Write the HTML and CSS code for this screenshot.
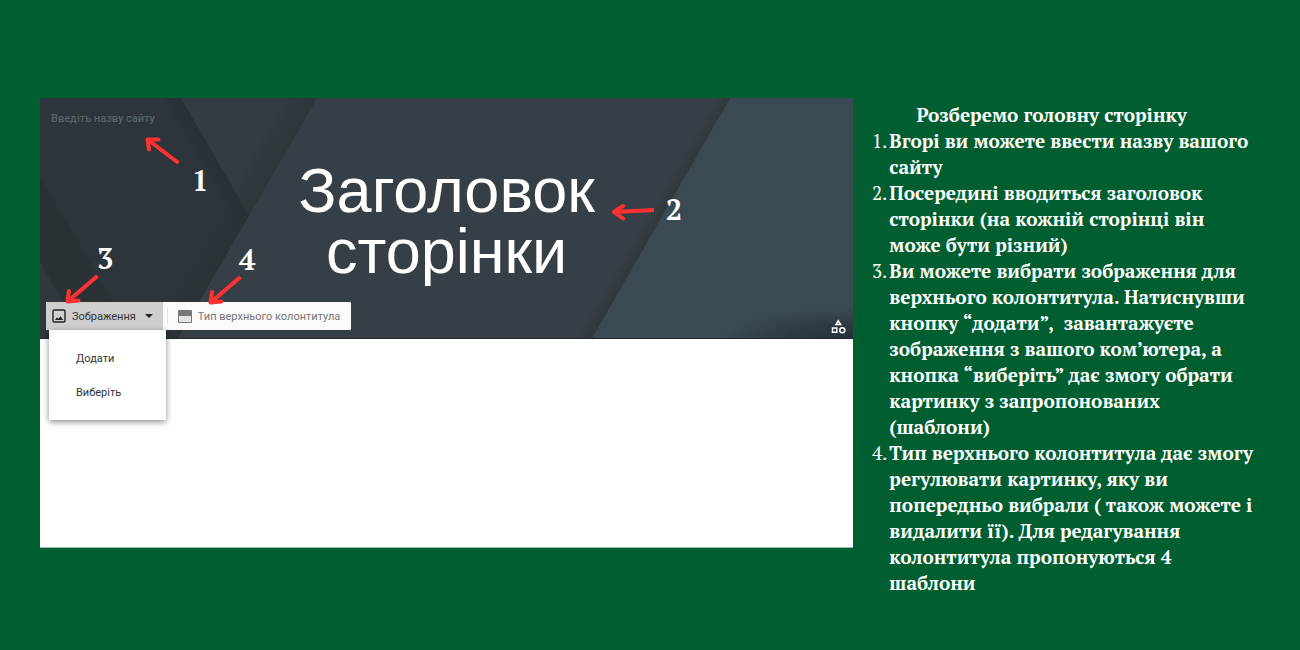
FILE: index.html
```html
<!DOCTYPE html>
<html lang="uk">
<head>
<meta charset="utf-8">
<meta name="viewport" content="width=device-width, initial-scale=1">
<title>Розберемо головну сторінку</title>
<link rel="stylesheet" href="styles.css">
</head>
<body>
<main class="slide">
  <section class="preview" aria-label="Редактор сайту">
    <header class="hero">
      <svg class="hero-bg" viewBox="0 0 813 241" preserveAspectRatio="none" aria-hidden="true">
        <defs>
          <linearGradient id="fold" gradientUnits="userSpaceOnUse" x1="160" y1="68" x2="175" y2="59">
            <stop offset="0" stop-color="#282e30" stop-opacity="0"/><stop offset="1" stop-color="#282e30" stop-opacity=".6"/>
          </linearGradient>
          <linearGradient id="edge" gradientUnits="userSpaceOnUse" x1="217" y1="44" x2="243" y2="59">
            <stop offset="0" stop-color="#2a3032" stop-opacity="0"/><stop offset="1" stop-color="#2a3032" stop-opacity=".55"/>
          </linearGradient>
          <linearGradient id="edge2" gradientUnits="userSpaceOnUse" x1="609" y1="113" x2="621" y2="120">
            <stop offset="0" stop-color="#2a3032" stop-opacity="0"/><stop offset="1" stop-color="#2a3032" stop-opacity=".4"/>
          </linearGradient>
          <radialGradient id="corner" gradientUnits="userSpaceOnUse" cx="0" cy="0" r="1" gradientTransform="translate(813 241) scale(130 30)">
            <stop offset="0" stop-color="#26313a"/><stop offset=".5" stop-color="#26313a" stop-opacity=".6"/><stop offset="1" stop-color="#26313a" stop-opacity="0"/>
          </radialGradient>
        </defs>
        <path fill="#353f45" d="M0 0h813v241H0z"/>
        <path fill="#2d343a" d="M0 0h141l68 118-71 123H0z"/>
        <path fill="#2b3235" d="M0 79l94 162H0z"/>
        <path fill="#30383d" d="M0 165l44 76H0z"/>
        <path fill="url(#fold)" d="M111 0h30l68 118-15 26z"/>
        <path fill="#343b41" d="M141 0h136l-68 118z"/>
        <path fill="url(#edge)" d="M217 0h60L138 241H78z"/>
        <path fill="url(#edge2)" d="M660 0h30L552 241h-30z"/>
        <path fill="#394a52" d="M690 0h123v241H552z"/>
        <path fill="url(#corner)" d="M680 205h133v36H680z"/>
      </svg>
      <input class="site-name" type="text" placeholder="Введіть назву сайту" aria-label="Назва сайту">
      <h1 class="title">Заголовок сторінки</h1>
      <div class="hero-foot">
        <div class="toolbar">
          <button class="tool tool-active" type="button" aria-haspopup="menu" aria-expanded="true">
            <svg width="14" height="14" viewBox="0 0 14 14" aria-hidden="true"><rect x="1" y="1" width="12" height="12" rx="1.2" fill="none" stroke="#222" stroke-width="1.4"/><path fill="#222" d="M3 11l1.800-2.600 1.500 1.400 2-2.500L11.300 11z"/></svg>
            Зображення
            <svg class="caret" width="8" height="4" viewBox="0 0 8 4" aria-hidden="true"><path fill="#222" d="M0 0h8L4 4z"/></svg>
          </button>
          <span class="divider"></span>
          <button class="tool" type="button">
            <svg width="14" height="13" viewBox="0 0 14 13" aria-hidden="true"><path fill="#777" d="M1 0h12q1 0 1 1v11q0 1-1 1H1q-1 0-1-1V1q0-1 1-1z"/><path fill="#e4e4e4" d="M1 6h12v6H1z"/></svg>
            Тип верхнього колонтитула
          </button>
          <ul class="menu">
            <li><button class="menu-item" type="button">Додати</button></li>
            <li><button class="menu-item" type="button">Виберіть</button></li>
          </ul>
        </div>
        <button class="shapes" type="button" aria-label="Фігури">
          <svg width="15" height="15" viewBox="0 0 15 15" fill="none" stroke="#fff" stroke-width="1.500" aria-hidden="true"><path d="M7.300 1.800L9.600 5.600H5z"/><path d="M1.500 9h4.300v4.300H1.500z"/><circle cx="11.300" cy="11.200" r="2.500"/></svg>
        </button>
      </div>
    </header>
    <div class="page-body"></div>

    <div class="mark mark-1"><svg width="36" height="30" viewBox="0 0 36 30"><path class="shaft" d="M34.500 27L3 3"/><path d="M5 13.500L3.500 3.500l11 0"/></svg></div>
    <div class="mark mark-2"><svg width="44" height="18" viewBox="0 0 44 18"><path class="shaft" d="M43 7L3 9"/><path d="M12 3L3 9l9 6.500"/></svg></div>
    <div class="mark mark-3"><svg width="36" height="32" viewBox="0 0 36 32"><path class="shaft" d="M33.500 3L3 29"/><path d="M5 18L3.500 28.500l11-1"/></svg></div>
    <div class="mark mark-4"><svg width="36" height="32" viewBox="0 0 36 32"><path class="shaft" d="M33.500 3L3 29"/><path d="M5 18L3.500 28.500l11-1"/></svg></div>
    <span class="num num-1">1</span>
    <span class="num num-2">2</span>
    <span class="num num-3">3</span>
    <span class="num num-4">4</span>
  </section>

  <article class="notes">
    <h2 class="notes-title">Розберемо головну сторінку</h2>
    <ol class="steps">
      <li>Вгорі ви можете ввести назву вашого сайту</li>
      <li>Посередині вводиться заголовок сторінки (на кожній сторінці він може бути різний)</li>
      <li>Ви можете вибрати зображення для верхнього колонтитула. Натиснувши кнопку “додати”,&nbsp; завантажуєте зображення з вашого ком’ютера, а кнопка “виберіть” дає змогу обрати картинку з запропонованих (шаблони)</li>
      <li>Тип верхнього колонтитула дає змогу регулювати картинку, яку ви попередньо вибрали ( також можете і видалити її). Для редагування колонтитула пропонуються 4 шаблони</li>
    </ol>
  </article>
</main>
</body>
</html>
```
FILE: styles.css
```css
* { box-sizing: border-box; }

body {
  margin: 0;
  min-height: 100vh;
  background: #005e30;
  color: #fff;
  font-family: "PT Serif", "Liberation Serif", serif;
}

button, input { font: inherit; color: inherit; border: 0; background: none; }

.slide {
  display: grid;
  grid-template-columns: 2fr 1fr;
  align-items: start;
  padding: 98px 40px 50px;
}

.preview {
  position: relative;
  background: #fff;
  border-bottom: 1px solid #9fb5a8;
  font-family: Roboto, sans-serif;
}

.hero {
  position: relative;
  display: flex;
  flex-direction: column;
  border-bottom: 1px solid #22292e;
}

.hero-bg { position: absolute; width: 100%; height: 100%; }

.site-name {
  position: relative;
  align-self: flex-start;
  width: 180px;
  height: 41px;
  padding: 0 11px;
  font-size: 11px;
  font-weight: 500;
}
.site-name::placeholder { color: #5c6265; opacity: 1; }

.title {
  position: relative;
  align-self: center;
  max-width: 400px;
  margin: 21px 0 20px;
  font: 400 63px/61px "Liberation Sans", Arial, sans-serif;
  text-align: center;
}

.hero-foot {
  position: relative;
  z-index: 1;
  display: flex;
  justify-content: space-between;
  align-items: flex-end;
  padding: 0 7px 8px 6px;
}

.toolbar {
  position: relative;
  display: flex;
  align-items: center;
  height: 28px;
  border-radius: 1px;
  background: #fafafa;
  color: #757575;
  font-size: 11px;
}

.tool {
  display: flex;
  align-items: center;
  gap: 6px;
  height: 28px;
  padding: 0 11px 0 10px;
  white-space: nowrap;
}
.tool-active { padding: 0 10px 0 6px; background: #cecece; color: #333; }
.caret { margin-left: 3px; }
.divider { width: 1px; height: 16px; margin-left: 4px; background: #e6e6e6; }

.menu {
  position: absolute;
  top: 100%;
  left: 3px;
  width: 117px;
  margin: 0;
  padding: 11px 0;
  list-style: none;
  background: #fff;
  color: #333;
  box-shadow: 0 2px 6px rgba(0, 0, 0, .45);
}
.menu-item { width: 100%; height: 34px; padding: 0 27px; text-align: left; }

.shapes { display: flex; padding: 0; margin-bottom: -4px; }

.page-body { height: 208px; }

.mark { position: absolute; z-index: 2; }
.mark svg { display: block; fill: none; stroke: #ff3131; stroke-width: 4; stroke-linecap: round; stroke-linejoin: round; }
.mark .shaft { stroke-linecap: butt; }
.mark-1 { left: 104px; top: 38px; }
.mark-2 { left: calc(50% + 164px); top: 105px; }
.mark-3 { left: 24px; top: 175px; }
.mark-4 { left: 167px; top: 176px; }

.num {
  position: absolute;
  z-index: 2;
  font: 700 29px/30px "PT Serif", "Liberation Serif", serif;
}
.num-1 { left: 152px; top: 67px; }
.num-2 { left: calc(50% + 219px); top: 96px; }
.num-3 { left: 57px; top: 145px; }
.num-4 { left: 199px; top: 146px; }

.notes {
  padding: 4px 6px 0 0;
  font-size: 19px;
  font-weight: 700;
  line-height: 26px;
}
.notes-title { margin: 0; padding-right: 4px; font-size: 19px; text-align: center; }
.steps { margin: 0; padding-left: 36px; counter-reset: step; list-style: none; }
.steps li { position: relative; counter-increment: step; }
.steps li::before {
  content: counter(step) ".";
  position: absolute;
  right: 100%;
  padding-right: 2px;
  font-weight: 400;
}
```
